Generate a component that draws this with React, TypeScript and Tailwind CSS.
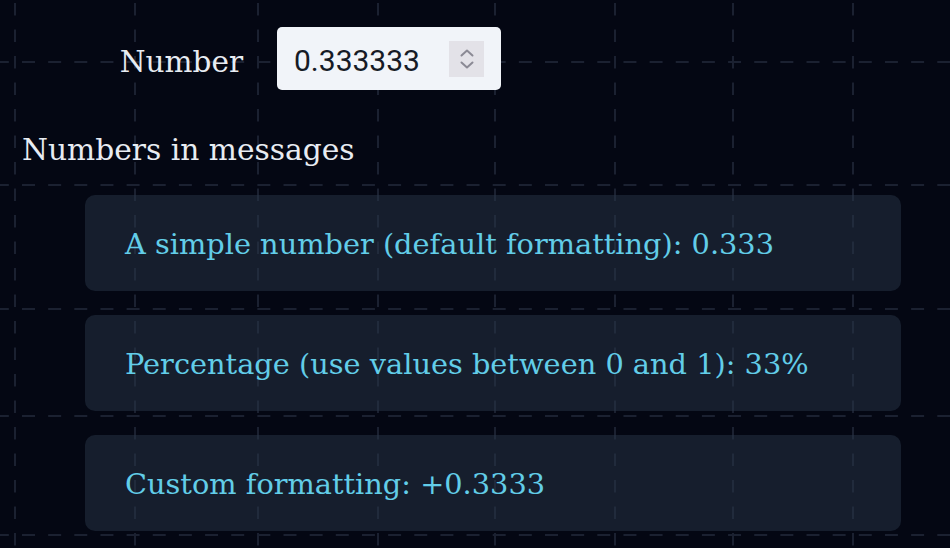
import React from "react"

const vLines = [15, 135, 258, 378, 495, 615, 733, 853]
const hLines = [62, 185, 309, 416, 535]

function GridBackdrop() {
  return (
    <svg className="absolute inset-0 pointer-events-none" width={950} height={548}>
      {vLines.map((x) => (
        <line key={"v" + x} x1={x} y1={0} x2={x} y2={548} stroke="#1b2131" strokeWidth={2} strokeDasharray="12.5 14" strokeDashoffset={23.5} />
      ))}
      {hLines.map((y) => (
        <line key={"h" + y} x1={0} y1={y} x2={950} y2={y} stroke="#1b2131" strokeWidth={2} strokeDasharray="13 13.15" strokeDashoffset={4.15} />
      ))}
    </svg>
  )
}

function Spinner() {
  return (
    <div className="w-[35px] h-[36px] bg-[#e3e2e8] flex flex-col items-center justify-center gap-[4px]">
      <svg width="14" height="8" viewBox="0 0 14 8" fill="none">
        <path d="M1.5 6.5 L7 1.5 L12.5 6.5" stroke="#8b8a95" strokeWidth="2" strokeLinecap="round" strokeLinejoin="round" />
      </svg>
      <svg width="14" height="8" viewBox="0 0 14 8" fill="none">
        <path d="M1.5 1.5 L7 6.5 L12.5 1.5" stroke="#8b8a95" strokeWidth="2" strokeLinecap="round" strokeLinejoin="round" />
      </svg>
    </div>
  )
}

const messages = [
  "A simple number (default formatting): 0.333",
  "Percentage (use values between 0 and 1): 33%",
  "Custom formatting: +0.3333",
]

export default function App() {
  return (
    <div className="relative w-[950px] h-[548px] overflow-hidden bg-[#040713] font-['Roboto_Slab','DejaVu_Serif',serif]">
      <GridBackdrop />

      <div className="relative flex flex-col pt-[27px]">
        {/* number input row */}
        <div className="flex items-center pl-[22px] gap-[34px]">
          <label className="w-[221px] mt-[6px] text-right text-[29.5px] leading-[40px] text-[#e8ecf2]">Number</label>
          <div className="w-[224px] h-[63px] rounded-[5px] bg-[#f1f4f9] flex items-center pl-[17px] pr-[17px]">
            <span className="flex-1 pt-[3px] font-['Roboto',sans-serif] text-[30px] text-[#161b26]">0.333333</span>
            <Spinner />
          </div>
        </div>

        <h2 className="pl-[22px] mt-[40px] text-[29.7px] leading-[40px] text-[#e8ecf2]">Numbers in messages</h2>

        <div className="flex flex-col gap-[24px] pl-[85px] mt-[25px]">
          {messages.map((m) => (
            <div key={m} className="w-[816px] h-[96px] rounded-[10px] bg-[rgba(40,54,72,0.5)] flex items-center px-[40px]">
              <span className="pt-[3px] text-[28.8px] text-[#62cde8] font-light">{m}</span>
            </div>
          ))}
        </div>
      </div>
    </div>
  )
}
